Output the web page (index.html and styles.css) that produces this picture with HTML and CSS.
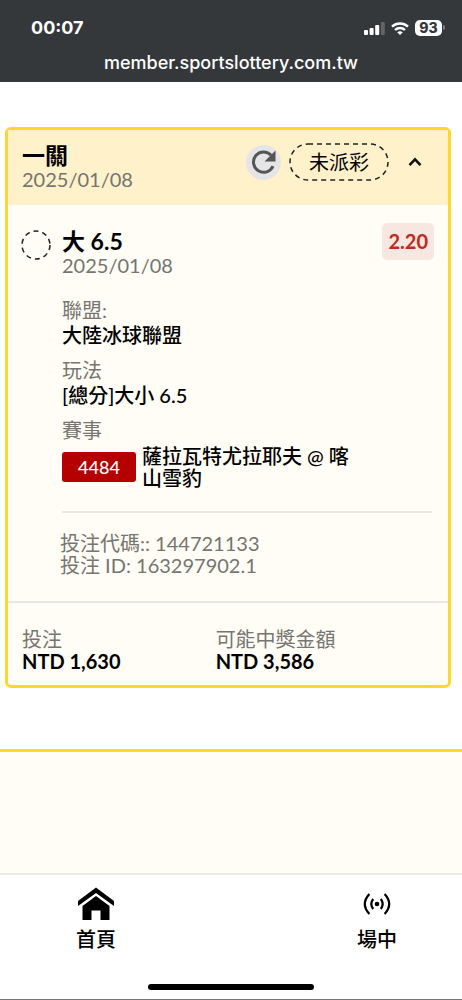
FILE: index.html
```html
<!DOCTYPE html>
<html lang="zh-Hant">
  <head>
    <meta charset="UTF-8" />
    <meta name="viewport" content="width=device-width, initial-scale=1.0" />
    <title>member.sportslottery.com.tw</title>
    <link rel="stylesheet" href="styles.css">
  </head>

  <body>
    <header class="browser_bar">
      <div class="status_row">
        <span class="clock">00:07</span>
        <div class="status_icons">
          <svg width="21" height="13" viewBox="0 0 21 13">
            <rect x="0" y="8" width="4" height="5" rx="1" fill="#fff" />
            <rect x="5.6" y="6" width="4" height="7" rx="1" fill="#fff" />
            <rect x="11.2" y="3" width="4" height="10" rx="1" fill="#fff" />
            <rect x="16.8" y="0" width="4" height="13" rx="1" fill="#626567" />
          </svg>
          <svg width="18" height="13" viewBox="0 0 18 13">
            <path d="M1 4.6C5.4 0.4 12.6 0.4 17 4.6" fill="none" stroke="#fff" stroke-width="2.4" />
            <path d="M4 8C6.8 5.3 11.2 5.3 14 8" fill="none" stroke="#fff" stroke-width="2.3" />
            <path d="M6.2 10.2C7.8 8.8 10.2 8.8 11.8 10.2L9 13Z" fill="#fff" />
          </svg>
          <span class="battery">93</span>
        </div>
      </div>
      <div class="address">member.sportslottery.com.tw</div>
    </header>

    <main>
      <article class="ticket">
        <div class="ticket_header">
          <div class="ticket_title">
            <h2>一關</h2>
            <p class="muted date">2025/01/08</p>
          </div>
          <div class="ticket_tools">
            <button type="button" class="refresh" aria-label="重新整理">
              <svg width="35" height="35" viewBox="0 0 35 35">
                <path d="M25.2 10.2A10.2 10.2 0 1 0 27 21.2" fill="none" stroke="#555" stroke-width="3" />
                <path d="M29.5 5.5V16.5H18.5Z" fill="#555" />
              </svg>
            </button>
            <span class="state">
              <svg class="state_outline"><rect x="1" y="1" rx="18" /></svg>
              未派彩
            </span>
            <button type="button" class="toggle" aria-label="收合">
              <svg width="14" height="10" viewBox="0 0 14 10">
                <path d="M1.5 8.2L7 2.4L12.5 8.2" fill="none" stroke="#111" stroke-width="2.6" />
              </svg>
            </button>
          </div>
        </div>

        <div class="bet">
          <svg class="pending" width="30" height="30" viewBox="0 0 30 30">
            <circle cx="15" cy="15" r="14" />
          </svg>
          <div class="bet_info">
            <h3>大 6.5</h3>
            <p class="muted date">2025/01/08</p>
            <dl>
              <dt>聯盟:</dt>
              <dd>大陸冰球聯盟</dd>
              <dt>玩法</dt>
              <dd>[總分]大小 6.5</dd>
              <dt>賽事</dt>
              <dd class="match">
                <span class="match_no">4484</span>
                <span class="match_name">薩拉瓦特尤拉耶夫 @ 喀山雪豹</span>
              </dd>
            </dl>
          </div>
          <span class="odds">2.20</span>
        </div>

        <div class="codes muted">
          <p>投注代碼:: 144721133</p>
          <p>投注 ID: 163297902.1</p>
        </div>

        <dl class="totals">
          <div>
            <dt>投注</dt>
            <dd>NTD 1,630</dd>
          </div>
          <div>
            <dt>可能中獎金額</dt>
            <dd>NTD 3,586</dd>
          </div>
        </dl>
      </article>

      <section class="next_block"></section>
    </main>

    <nav class="tab_bar">
      <div class="tabs">
        <a href="#">
          <svg width="36" height="34" viewBox="0 0 36 34">
            <path d="M18 0.5L36 14V19L18 6L0 19V14Z" />
            <path d="M18 9L31.5 19V33H22.5V23.5H13.5V33H4.5V19Z" />
          </svg>
          首頁
        </a>
        <a href="#">
          <svg width="28" height="34" viewBox="0 0 28 34">
            <circle cx="14" cy="17" r="2.3" />
            <g fill="none" stroke="#000" stroke-width="2.2">
              <path d="M10.2 12Q6.4 17 10.2 22" />
              <path d="M17.8 12Q21.6 17 17.8 22" />
              <path d="M6.4 7Q-2.8 17 6.4 27" />
              <path d="M21.6 7Q30.8 17 21.6 27" />
            </g>
          </svg>
          場中
        </a>
      </div>
      <div class="home_indicator"></div>
    </nav>
  </body>
</html>
```

FILE: styles.css
```css
* {
  box-sizing: border-box;
}

body {
  margin: 0;
  min-height: 100vh;
  display: flex;
  flex-direction: column;
  color: #000;
  background-color: #fff;
  font-family: Lato, "Noto Sans CJK TC", sans-serif;
  font-size: 20px;
  line-height: 22px;
}

h2, h3, p, dl, dd {
  margin: 0;
}

button {
  padding: 0;
  border: none;
  background: none;
  cursor: pointer;
}

svg {
  display: block;
}

.muted, dt {
  color: #757571;
}

/* phone status and address */

.browser_bar {
  padding: 16px 20px 7px 31px;
  background-color: #35383b;
  color: #fff;
  font-family: Inter, sans-serif;
}

.status_row {
  display: flex;
  justify-content: space-between;
  align-items: center;
  height: 24px;
}

.clock {
  font-size: 18px;
  font-weight: 700;
}

.status_icons {
  display: flex;
  align-items: center;
  gap: 6px;
}

.battery {
  position: relative;
  width: 27px;
  border-radius: 5px;
  background-color: #fff;
  color: #35383b;
  font-size: 14px;
  font-weight: 800;
  line-height: 16px;
  text-align: center;
}

.battery::after {
  content: "";
  position: absolute;
  top: 5px;
  right: -3px;
  width: 2px;
  height: 5px;
  border-radius: 0 2px 2px 0;
  background-color: #7a7d7f;
}

.address {
  margin: 11px 11px 0 0;
  font-size: 18px;
  font-weight: 500;
  line-height: 24px;
  text-align: center;
}

/* ticket */

main {
  flex: 1;
  display: flex;
  flex-direction: column;
}

.ticket {
  margin: 45px 11px 61px 5px;
  border: 3px solid #ffd62e;
  border-radius: 6px;
  background-color: #fffdf5;
}

.ticket_header {
  display: flex;
  align-items: flex-start;
  justify-content: space-between;
  padding: 13px 26px 14px 14px;
  background-color: #fff1ca;
}

.ticket_tools {
  display: flex;
  align-items: center;
}

h2, h3 {
  font-size: 23px;
  line-height: 24px;
}

.date {
  line-height: 24px;
}

.refresh {
  border-radius: 50%;
  background-color: #e5e5e7;
}

.state {
  position: relative;
  margin: 0 19px 0 8px;
  padding: 8px 20px;
}

.state_outline {
  position: absolute;
  inset: 0;
  width: 100%;
  height: 100%;
}

.state_outline rect {
  width: calc(100% - 2px);
  height: calc(100% - 2px);
}

.state_outline rect, .pending circle {
  fill: none;
  stroke: #222;
  stroke-width: 1.5;
  stroke-dasharray: 5 4;
}

.bet {
  display: grid;
  grid-template-columns: 30px 1fr auto;
  column-gap: 10px;
  align-items: start;
  margin-right: 14px;
  padding: 18px 0 22px 13px;
}

.pending {
  margin-top: 7px;
}

.bet_info {
  padding: 6px 10px 0 1px;
}

.odds {
  padding: 0 6px;
  border-radius: 5px;
  background-color: #f8e6e0;
  color: #bd2a22;
  font-weight: 700;
  line-height: 37px;
}

.bet_info dl {
  margin-top: 21px;
  line-height: 25px;
}

dd {
  font-weight: 700;
}

.bet_info dd {
  margin-bottom: 10px;
  font-weight: 500;
}

.bet_info .match {
  display: flex;
  align-items: center;
  gap: 6px;
  margin: 2px 0 0;
  line-height: 22px;
}

.match_no {
  flex: none;
  width: 74px;
  border-radius: 3px;
  background-color: #b50000;
  color: #fff;
  font-size: 18px;
  line-height: 30px;
  text-align: center;
}

.codes {
  margin: 0 16px 0 54px;
  padding: 19px 0 25px;
  border-top: 2px solid #ebe9e2;
}

.codes p {
  margin-left: -2px;
}

.totals {
  display: grid;
  grid-template-columns: 47% 53%;
  padding: 25px 14px 13px;
  border-top: 2px solid #e9e7e1;
}

.next_block {
  flex: 1;
  border-top: 3px solid #ffd62e;
  background-color: #fffdf5;
}

/* bottom navigation */

.tab_bar {
  padding-bottom: 9px;
  border-top: 2px solid #ebebeb;
  border-bottom: 1px solid #777;
}

.tabs {
  display: flex;
  justify-content: space-between;
  padding: 12px 65px 34px 76px;
}

.tabs a {
  display: flex;
  flex-direction: column;
  align-items: center;
  gap: 7px;
  color: #000;
  font-weight: 500;
  text-decoration: none;
}

.home_indicator {
  width: 36%;
  height: 6px;
  margin: 0 auto;
  border-radius: 3px;
  background-color: #000;
}
```
